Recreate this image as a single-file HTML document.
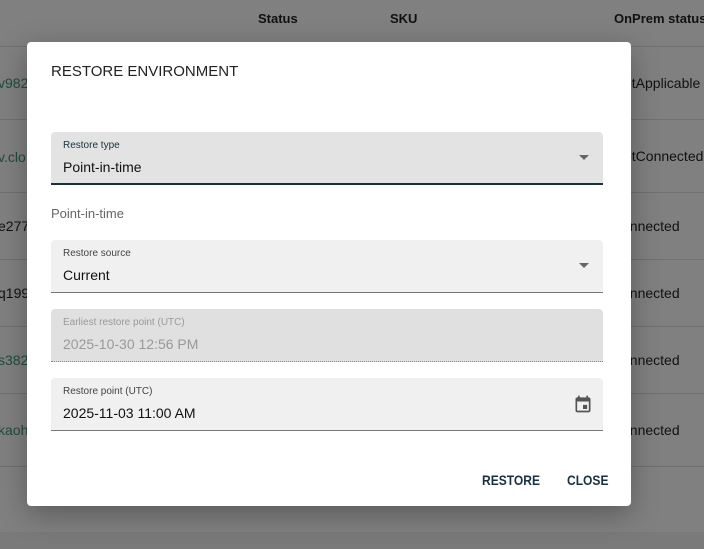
<!DOCTYPE html>
<html><head><style>
body{margin:0;width:704px;height:549px;background:#808080;font-family:"Liberation Sans",sans-serif;position:relative;overflow:hidden;color:#111}
.a{position:absolute;white-space:nowrap}
.line{position:absolute;left:0;width:704px;height:1px;background:#707070}
.g{color:#1f4d3a;font-size:14px}
.r{font-size:14px;color:#111}
.dlg{position:absolute;left:27px;top:42px;width:604px;height:464px;background:#fff;border-radius:4px;box-shadow:0 8px 30px rgba(0,0,0,.3)}
.f{position:absolute;left:24px;width:552px;background:#f0f0f0;border-radius:4px 4px 0 0;border-bottom:1px solid #777}
.lab{position:absolute;left:12px;top:8px;font-size:10px;color:#444}
.val{position:absolute;left:12px;top:27px;font-size:14px;color:#111}
.tri{position:absolute;right:14px;top:23px;width:0;height:0;border-left:5px solid transparent;border-right:5px solid transparent;border-top:5px solid #666}
.btn{position:absolute;top:430px;font-size:14px;font-weight:bold;color:#17323f;transform:scaleX(.86);transform-origin:left}
</style></head><body>
<div class="a" style="left:258px;top:11px;font-size:13px;font-weight:bold">Status</div>
<div class="a" style="left:390px;top:11px;font-size:13px;font-weight:bold">SKU</div>
<div class="a" style="left:614px;top:11px;font-size:13px;font-weight:bold">OnPrem status</div>
<div class="line" style="top:46px"></div>
<div class="line" style="top:119px"></div>
<div class="line" style="top:192px"></div>
<div class="line" style="top:259px"></div>
<div class="line" style="top:326px"></div>
<div class="line" style="top:393px"></div>
<div class="line" style="top:466px"></div>
<div style="position:absolute;left:0;top:532px;width:704px;height:17px;background:#7a7a7a"></div>
<div class="a g" style="left:-2px;top:75px">v982</div>
<div class="a g" style="left:-2px;top:149px">v.clo</div>
<div class="a r" style="left:-2px;top:218px">e277</div>
<div class="a r" style="left:-2px;top:285px">q199</div>
<div class="a g" style="left:-2px;top:352px">s382</div>
<div class="a g" style="left:-2px;top:422px">kaoh</div>
<div class="a r" style="left:624px;top:75px">otApplicable</div>
<div class="a r" style="left:624px;top:148px">otConnected</div>
<div class="a r" style="left:622px;top:218px">onnected</div>
<div class="a r" style="left:622px;top:285px">onnected</div>
<div class="a r" style="left:622px;top:352px">onnected</div>
<div class="a r" style="left:622px;top:422px">onnected</div>
<div class="dlg">
<div class="a" style="left:24px;top:21px;font-size:15px;color:#222">RESTORE ENVIRONMENT</div>
<div class="f" style="top:90px;height:51px;background:#e3e3e3;border-bottom:2px solid #17323f"><div class="lab" style="color:#17323f">Restore type</div><div class="val">Point-in-time</div><div class="tri"></div></div>
<div class="a" style="left:24px;top:164px;font-size:13px;color:#666">Point-in-time</div>
<div class="f" style="top:198px;height:52px"><div class="lab">Restore source</div><div class="val">Current</div><div class="tri"></div></div>
<div class="f" style="top:267px;height:52px;background:#e0e0e0;border-bottom:1px dotted #888"><div class="lab" style="color:#999">Earliest restore point (UTC)</div><div class="val" style="color:#999">2025-10-30 12:56 PM</div></div>
<div class="f" style="top:336px;height:52px"><div class="lab">Restore point (UTC)</div><div class="val">2025-11-03 11:00 AM</div>
<svg style="position:absolute;right:10px;top:16px" width="20" height="20" viewBox="0 0 24 24"><path fill="#555" d="M19 4h-1V2h-2v2H8V2H6v2H5c-1.1 0-2 .9-2 2v14c0 1.1.9 2 2 2h14c1.1 0 2-.9 2-2V6c0-1.1-.9-2-2-2zm0 16H5V9h14v11zM12 13h5v5h-5z"/></svg></div>
<div class="btn" style="left:455px">RESTORE</div>
<div class="btn" style="left:540px">CLOSE</div>
</div>
</body></html>
